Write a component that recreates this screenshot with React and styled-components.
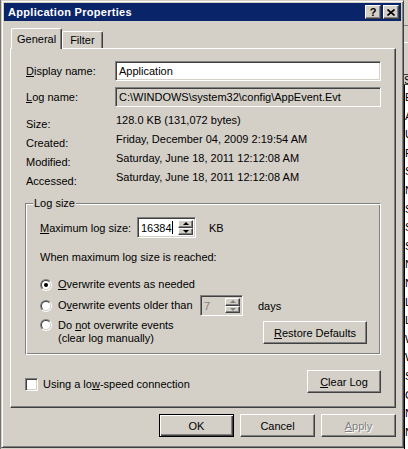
import React from 'react'
import styled, { createGlobalStyle, css } from 'styled-components'

const face = '#d4d0c8'

const GlobalStyle = createGlobalStyle`
  html, body {
    margin: 0;
    padding: 0;
    background: ${face};
    overflow: hidden;
  }
  body {
    font-family: "Liberation Sans", Arial, sans-serif;
    font-size: 11px;
    color: #000;
  }
  * { box-sizing: border-box; }
`

// bevels
const raised = css`
  border: 1px solid;
  border-color: #fff #404040 #404040 #fff;
  box-shadow: inset -1px -1px #808080;
`
const sunken = css`
  border: 1px solid;
  border-color: #808080 #fff #fff #808080;
  box-shadow: inset 1px 1px #404040, inset -1px -1px ${face};
`

const Screen = styled.div`
  display: flex;
  width: 408px;
  height: 449px;
  overflow: hidden;
`

const LeftEdge = styled.div`
  flex: none;
  width: 1px;
  background: #707070;
`

const Window = styled.div`
  flex: none;
  width: 403px;
  height: 448px;
  display: flex;
  flex-direction: column;
  background: ${face};
  border: 1px solid;
  border-color: ${face} #404040 #404040 ${face};
  box-shadow: inset 1px 1px #fff, inset -1px -1px #808080;
  padding: 2px;
`

const TitleBar = styled.div`
  height: 18px;
  display: flex;
  align-items: center;
  padding: 0 2px;
  background: #0a246a;
  color: #fff;
`

const TitleText = styled.div`
  flex: 1;
  font-weight: bold;
  font-size: 11px;
  letter-spacing: 0.3px;
  padding-left: 2px;
`

const CaptionButton = styled.div`
  width: 16px;
  height: 14px;
  margin-left: ${p => (p.$gap ? '2px' : '0')};
  display: flex;
  align-items: center;
  justify-content: center;
  background: ${face};
  color: #000;
  font-weight: bold;
  font-size: 11px;
  ${raised}
`

const Body = styled.div`
  flex: 1;
  display: flex;
  flex-direction: column;
  padding: 7px 5px 0 6px;
`

const TabRow = styled.div`
  height: 20px;
  display: flex;
  align-items: flex-end;
  padding-left: 1px;
  position: relative;
  z-index: 1;
`

const Tab = styled.div`
  display: flex;
  align-items: center;
  background: ${face};
  border-top: 1px solid #fff;
  border-left: 1px solid #fff;
  border-right: 1px solid #404040;
  box-shadow: inset -1px 0 #808080;
  border-radius: 2px 2px 0 0;
  ${p => p.$active
    ? css`
      height: 21px;
      margin-bottom: -1px;
      padding: 0 5px 1px 5px;
      position: relative;
      z-index: 2;
    `
    : css`
      height: 17px;
      padding: 0 7px 0 7px;
    `}
`

const Panel = styled.div`
  height: 360px;
  display: flex;
  flex-direction: column;
  border: 1px solid;
  border-color: #fff #404040 #404040 #fff;
  box-shadow: inset -1px -1px #808080;
  padding: 12px 14px 0 14px;
`

const FormGrid = styled.div`
  display: grid;
  grid-template-columns: 90px 1fr;
  row-gap: 6px;
  align-items: center;
`

const FieldLabel = styled.div`
  padding-left: 1px;
`

const TextField = styled.div`
  height: 20px;
  display: flex;
  align-items: center;
  padding: 0 3px;
  white-space: nowrap;
  overflow: hidden;
  background: ${p => (p.$readOnly ? face : '#fff')};
  ${sunken}
`

const InfoList = styled.div`
  margin-top: 7px;
  display: grid;
  grid-template-columns: 91px 1fr;
  grid-auto-rows: 19px;
`

const InfoLabel = styled.div`
  padding: 4px 0 0 1px;
  line-height: 13px;
`

const InfoValue = styled.div`
  line-height: 13px;
  white-space: nowrap;
`

const GroupBox = styled.fieldset`
  margin: 7px 0 0 0;
  min-width: 0;
  padding: 7px 13px 9px 14px;
  border: 1px solid;
  border-color: #808080 #fff #fff #808080;
  box-shadow: inset 1px 1px #fff, inset -1px -1px #808080;
`

const GroupLegend = styled.legend`
  margin-left: -7px;
  padding: 0 1px;
  line-height: 13px;
  background: ${face};
`

const SizeRow = styled.div`
  display: flex;
  align-items: center;
  height: 21px;
`

const SizeLabel = styled.div`
  width: 97px;
`

const Unit = styled.div`
  margin-left: ${p => p.$gap}px;
`

const SpinBox = styled.div`
  width: ${p => p.$width}px;
  height: 21px;
  display: flex;
  background: ${p => (p.$disabled ? face : '#fff')};
  color: ${p => (p.$disabled ? '#808080' : '#000')};
  ${sunken}
  padding: 2px;
`

const SpinText = styled.div`
  flex: 1;
  display: flex;
  align-items: center;
  padding-left: 1px;
`

const Caret = styled.span`
  width: 1px;
  height: 13px;
  background: #000;
`

const SpinButtons = styled.div`
  width: 15px;
  display: flex;
  flex-direction: column;
`

const SpinButton = styled.div`
  flex: 1;
  display: flex;
  align-items: center;
  justify-content: center;
  background: ${face};
  ${raised}
`

const Arrow = styled.span`
  width: 0;
  height: 0;
  border-left: 3px solid transparent;
  border-right: 3px solid transparent;
  ${p => (p.$down
    ? css`border-top: 3px solid ${p.$disabled ? '#808080' : '#000'};`
    : css`border-bottom: 3px solid ${p.$disabled ? '#808080' : '#000'};`)}
`

const Prompt = styled.div`
  margin-top: 13px;
  line-height: 13px;
`

const RadioRow = styled.div`
  display: flex;
  align-items: ${p => (p.$top ? 'flex-start' : 'center')};
  height: ${p => (p.$top ? 'auto' : '21px')};
  margin-top: ${p => p.$mt || 0}px;
`

const Radio = styled.span`
  flex: none;
  width: 12px;
  height: 12px;
  margin-right: 6px;
  border-radius: 50%;
  border: 1px solid;
  border-color: #808080 #fff #fff #808080;
  display: flex;
  align-items: center;
  justify-content: center;
  &::before {
    content: '';
    width: 10px;
    height: 10px;
    border-radius: 50%;
    box-sizing: border-box;
    border: 1px solid;
    border-color: #404040 ${face} ${face} #404040;
    background: #fff;
  }
  &::after {
    content: '';
    position: absolute;
    width: 4px;
    height: 4px;
    border-radius: 50%;
    background: ${p => (p.$checked ? '#000' : 'transparent')};
  }
`

const RadioLabel = styled.div`
  width: ${p => (p.$width ? `${p.$width}px` : 'auto')};
  line-height: 13px;
  white-space: nowrap;
`

const PushButton = styled.button`
  font: inherit;
  color: #000;
  height: 23px;
  width: ${p => p.$width}px;
  padding: 0;
  background: ${face};
  ${raised}
  box-shadow: inset -1px -1px #808080;
  ${p => p.$default && css`
    border: 1px solid #000;
    box-shadow: inset 1px 1px #fff, inset -1px -1px #404040, inset -2px -2px #808080;
  `}
  &:disabled {
    color: #808080;
    text-shadow: 1px 1px #fff;
  }
`

const RestoreButton = styled(PushButton)`
  margin-left: auto;
  margin-top: 2px;
`

const BottomRow = styled.div`
  margin-top: 15px;
  display: flex;
  align-items: flex-start;
`

const CheckBox = styled.span`
  flex: none;
  width: 13px;
  height: 13px;
  margin: 8px 5px 0 0;
  background: #fff;
  ${sunken}
`

const CheckLabel = styled.div`
  margin-top: 8px;
  line-height: 13px;
`

const ClearButton = styled(PushButton)`
  margin-left: auto;
`

const ButtonRow = styled.div`
  margin-top: 6px;
  display: flex;
  justify-content: flex-end;
  gap: 6px;
`

const Key = styled.span`
  text-decoration: underline;
`

// the window behind, on the right
const BackPane = styled.div`
  flex: 1;
  display: flex;
  flex-direction: column;
  overflow: hidden;
  background: ${face};
`

const BackBand = styled.div`
  flex: none;
  height: ${p => p.$h}px;
  border-bottom: 1px solid ${p => p.$line};
`

const BackHeader = styled.div`
  flex: none;
  height: 10px;
  line-height: 10px;
  white-space: nowrap;
  border-bottom: 1px solid #404040;
`

const BackList = styled.div`
  flex: 1;
  background: #fff;
  border-left: 1px solid #000;
  padding-top: 3px;
`

const BackItem = styled.div`
  height: 18.6px;
  line-height: 18.6px;
  white-space: nowrap;
`

const sources = ['Error', 'Application', 'Userenv', 'Flags', 'Security', 'NetBT', 'Service', 'System', 'Setup',
  'Netlogon', 'NTDS', 'LoadPerf', 'Lsasrv', 'Winlogon', 'W32Time', 'Srv', 'Cdrom', 'Ntfs', 'NtServicePack']

const SpinControl = ({ width, value, disabled, caret }) => (
  <SpinBox $width={width} $disabled={disabled}>
    <SpinText>{value}{caret && <Caret />}</SpinText>
    <SpinButtons>
      <SpinButton><Arrow $disabled={disabled} /></SpinButton>
      <SpinButton><Arrow $down $disabled={disabled} /></SpinButton>
    </SpinButtons>
  </SpinBox>
)

const App = () => {
  const info = [
    ['Size:', '128.0 KB (131,072 bytes)'],
    ['Created:', 'Friday, December 04, 2009 2:19:54 AM'],
    ['Modified:', 'Saturday, June 18, 2011 12:12:08 AM'],
    ['Accessed:', 'Saturday, June 18, 2011 12:12:08 AM'],
  ]

  return (
    <Screen>
      <GlobalStyle />
      <LeftEdge />
      <Window>
        <TitleBar>
          <TitleText>Application Properties</TitleText>
          <CaptionButton>?</CaptionButton>
          <CaptionButton $gap>
            <svg width="8" height="7" viewBox="0 0 8 7">
              <path d="M0.5 0.5 L7.5 6.5 M7.5 0.5 L0.5 6.5" stroke="#000" strokeWidth="1.6" />
            </svg>
          </CaptionButton>
        </TitleBar>
        <Body>
          <TabRow>
            <Tab $active>General</Tab>
            <Tab>Filter</Tab>
          </TabRow>
          <Panel>
            <FormGrid>
              <FieldLabel><Key>D</Key>isplay name:</FieldLabel>
              <TextField>Application</TextField>
              <FieldLabel><Key>L</Key>og name:</FieldLabel>
              <TextField $readOnly>C:\WINDOWS\system32\config\AppEvent.Evt</TextField>
            </FormGrid>

            <InfoList>
              {info.map(([label, value]) => (
                <React.Fragment key={label}>
                  <InfoLabel>{label}</InfoLabel>
                  <InfoValue>{value}</InfoValue>
                </React.Fragment>
              ))}
            </InfoList>

            <GroupBox>
              <GroupLegend>Log size</GroupLegend>
              <SizeRow>
                <SizeLabel><Key>M</Key>aximum log size:</SizeLabel>
                <SpinControl width={59} value="16384" caret />
                <Unit $gap={13}>KB</Unit>
              </SizeRow>
              <Prompt>When maximum log size is reached:</Prompt>
              <RadioRow $mt={10}>
                <Radio $checked />
                <RadioLabel><Key>O</Key>verwrite events as needed</RadioLabel>
              </RadioRow>
              <RadioRow>
                <Radio />
                <RadioLabel $width={142}>O<Key>v</Key>erwrite events older than</RadioLabel>
                <SpinControl width={43} value="7" disabled />
                <Unit $gap={15}>days</Unit>
              </RadioRow>
              <RadioRow $top $mt={3}>
                <Radio />
                <RadioLabel>
                  Do <Key>n</Key>ot overwrite events<br />(clear log manually)
                </RadioLabel>
                <RestoreButton $width={104}><Key>R</Key>estore Defaults</RestoreButton>
              </RadioRow>
            </GroupBox>

            <BottomRow>
              <CheckBox />
              <CheckLabel>Using a lo<Key>w</Key>-speed connection</CheckLabel>
              <ClearButton $width={74}><Key>C</Key>lear Log</ClearButton>
            </BottomRow>
          </Panel>
          <ButtonRow>
            <PushButton $width={75} $default>OK</PushButton>
            <PushButton $width={75}>Cancel</PushButton>
            <PushButton $width={75} disabled><Key>A</Key>pply</PushButton>
          </ButtonRow>
        </Body>
      </Window>
      <BackPane>
        <BackBand $h={26} $line="#808080" />
        <BackBand $h={17} $line="#fff" />
        <BackBand $h={32} $line="#404040" />
        <BackHeader>Source</BackHeader>
        <BackList>
          {sources.map((s, i) => <BackItem key={i}>{s}</BackItem>)}
        </BackList>
      </BackPane>
    </Screen>
  )
}

export default App
